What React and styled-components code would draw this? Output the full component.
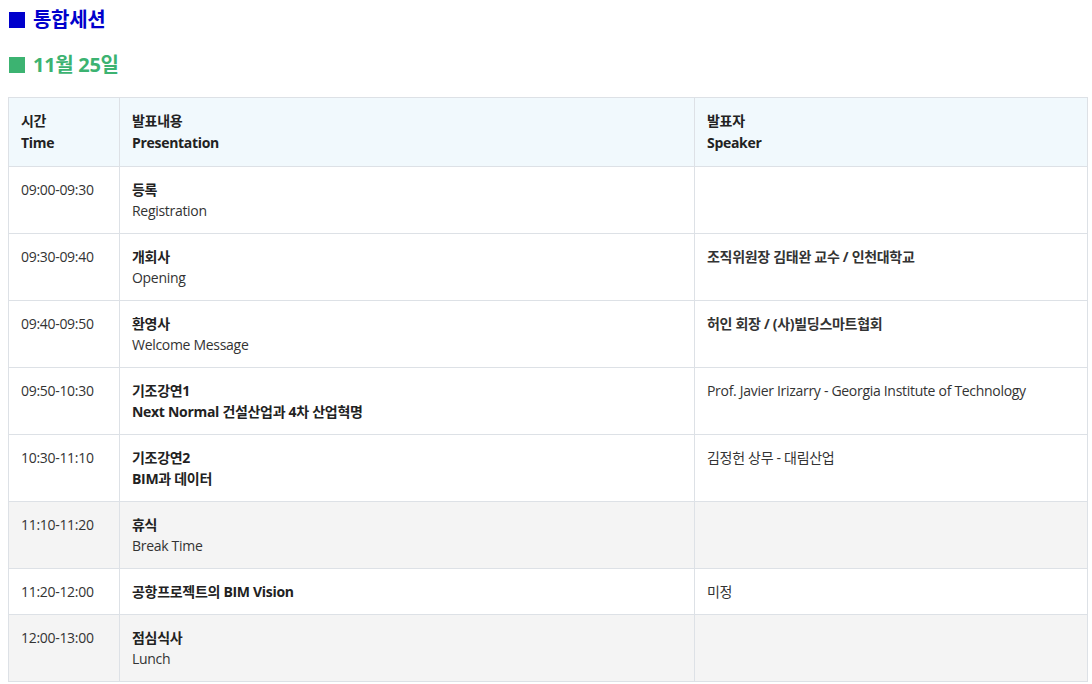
import React from 'react'
import styled, { createGlobalStyle } from 'styled-components'

const GlobalStyle = createGlobalStyle`
  body {
    margin: 0;
    padding: 0 8px;
    font-family: 'Open Sans', 'Noto Sans CJK KR', sans-serif;
    color: #222;
    background: #fff;
  }
`

const ROWS = [
  { time: '09:00-09:30', title: '등록', sub: 'Registration', speaker: '' },
  { time: '09:30-09:40', title: '개회사', sub: 'Opening', speaker: '조직위원장 김태완 교수 / 인천대학교', strong: true },
  { time: '09:40-09:50', title: '환영사', sub: 'Welcome Message', speaker: '허인 회장 / (사)빌딩스마트협회', strong: true },
  { time: '09:50-10:30', title: '기조강연1', sub: 'Next Normal 건설산업과 4차 산업혁명', subBold: true, speaker: 'Prof. Javier Irizarry - Georgia Institute of Technology' },
  { time: '10:30-11:10', title: '기조강연2', sub: 'BIM과 데이터', subBold: true, speaker: '김정헌 상무 - 대림산업' },
  { time: '11:10-11:20', title: '휴식', sub: 'Break Time', speaker: '', muted: true },
  { time: '11:20-12:00', title: '공항프로젝트의 BIM Vision', speaker: '미정' },
  { time: '12:00-13:00', title: '점심식사', sub: 'Lunch', speaker: '', muted: true }
]

const Page = styled.div`
  padding-top: 6px;
`

const Heading = styled.h2`
  margin: 0;
  font-size: 20px;
  font-weight: 700;
  line-height: 28px;
  letter-spacing: -0.3px;
  color: ${props => props.color};
  display: flex;
  align-items: center;
  gap: 8px;
`

const Square = styled.span`
  display: inline-block;
  width: 16px;
  height: 16px;
  margin-left: 1px;
  background: ${props => props.color};
`

const DateHeading = styled(Heading)`
  margin-top: 17px;
  margin-bottom: 18px;
`

const Table = styled.table`
  width: 1080px;
  border-collapse: collapse;
  font-size: 14px;
  line-height: 21px;
  letter-spacing: -0.3px;
  table-layout: fixed;
`

const HeadCell = styled.th`
  background: #f1f9fd;
  border: 1px solid #dde1e6;
  padding: 12px;
  text-align: left;
  font-weight: 700;
  line-height: 22px;
  vertical-align: top;
  color: #222;
`

const Row = styled.tr`
  background: ${props => props.muted ? '#f4f4f4' : '#fff'};
`

const Cell = styled.td`
  border: 1px solid #dde1e6;
  padding: 12px;
  vertical-align: top;
  color: #333;
  font-weight: ${props => props.strong ? 700 : 400};
`

const Title = styled.div`
  font-weight: 700;
  color: #222;
`

const Sub = styled.div`
  font-weight: ${props => props.bold ? 700 : 400};
  color: ${props => props.bold ? '#222' : '#333'};
`

export default function App () {
  return (
    <Page>
      <GlobalStyle />
      <Heading color='#0000cc'><Square color='#0000cc' />통합세션</Heading>
      <DateHeading color='#3cb371'><Square color='#3cb371' />11월 25일</DateHeading>
      <Table>
        <colgroup>
          <col style={{ width: 111 }} />
          <col style={{ width: 575 }} />
          <col />
        </colgroup>
        <thead>
          <tr>
            <HeadCell>시간<br />Time</HeadCell>
            <HeadCell>발표내용<br />Presentation</HeadCell>
            <HeadCell>발표자<br />Speaker</HeadCell>
          </tr>
        </thead>
        <tbody>
          {ROWS.map(row => (
            <Row key={row.time} muted={row.muted}>
              <Cell>{row.time}</Cell>
              <Cell>
                <Title>{row.title}</Title>
                {row.sub && <Sub bold={row.subBold}>{row.sub}</Sub>}
              </Cell>
              <Cell strong={row.strong}>{row.speaker}</Cell>
            </Row>
          ))}
        </tbody>
      </Table>
    </Page>
  )
}
